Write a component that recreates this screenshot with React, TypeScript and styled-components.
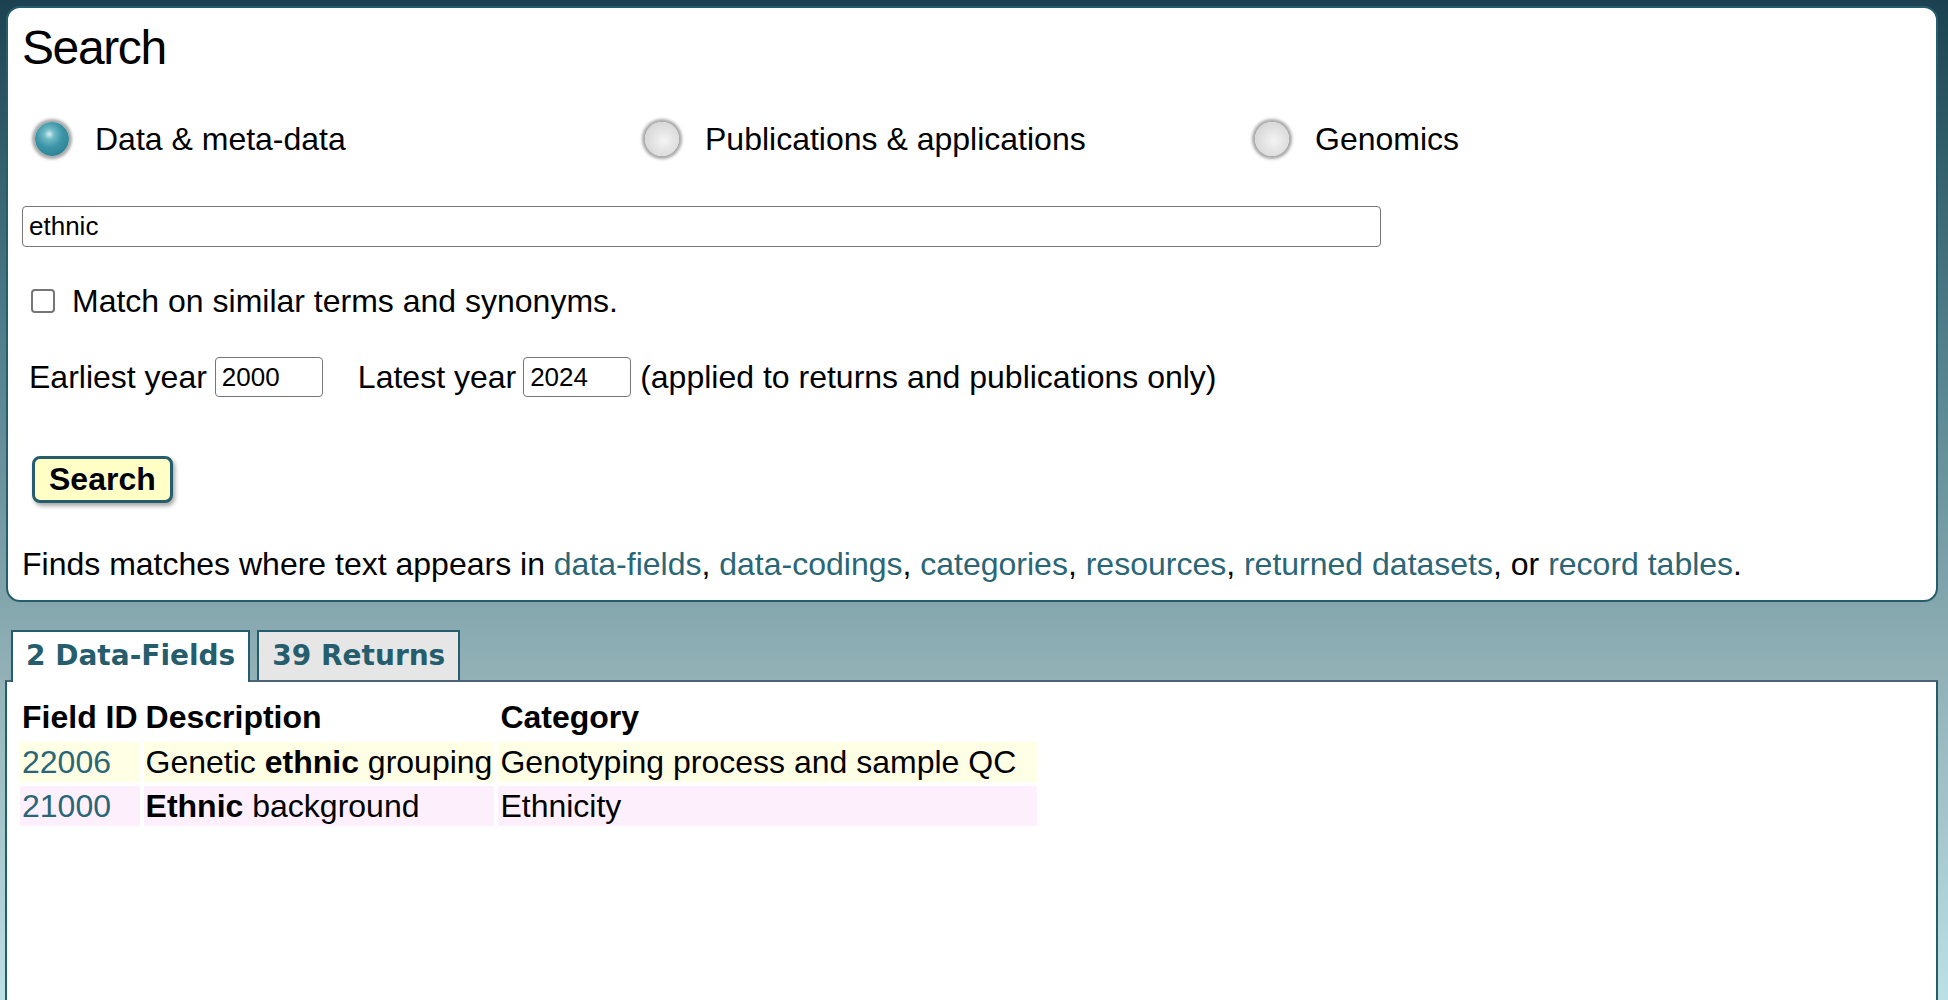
import React, { FC } from "react";
import styled, { createGlobalStyle } from "styled-components";

const teal = "#255d6c";
const linkColor = "#2a6676";

const GlobalStyle = createGlobalStyle`
  html, body {
    margin: 0;
    padding: 0;
  }
  body {
    font-family: "Liberation Sans", Arial, Helvetica, sans-serif;
    color: #000;
    min-height: 100vh;
    overflow: hidden;
    background: linear-gradient(
      to bottom,
      #1c4251 0%,
      #4f7d8a 30%,
      #8fafb5 60%,
      #c9eff1 100%
    );
  }
`;

const Page = styled.div`
  padding: 6px 10px 0 5px;
`;

const Panel = styled.div`
  margin-left: 1px;
  background: #fff;
  border: 2px solid ${teal};
  border-radius: 14px;
  padding: 12px 14px 16px 14px;
`;

const Heading = styled.h1`
  margin: 0;
  font-size: 48px;
  letter-spacing: -1.4px;
  font-weight: normal;
  line-height: 56px;
`;

const RadioRow = styled.div`
  margin-top: 38px;
  height: 50px;
  padding-left: 13px;
  display: grid;
  grid-template-columns: repeat(3, 610px);
  align-items: center;
`;

const RadioOption = styled.label`
  display: flex;
  align-items: center;
  gap: 26px;
  font-size: 32px;
`;

const RadioBall = styled.span<{ $checked?: boolean }>`
  width: 34px;
  height: 34px;
  border-radius: 50%;
  flex: none;
  background: ${(p) =>
    p.$checked
      ? "radial-gradient(circle at 42% 36%, #d8eef2 0%, #6fb9c6 18%, #3b95a6 45%, #2c8193 80%, #2a7687 100%)"
      : "radial-gradient(circle at 55% 55%, #f4f4f4 0%, #e2e2e2 45%, #cdcdcd 100%)"};
  box-shadow: 0 0 3px 3px rgba(110, 110, 110, 0.6);
`;

const TextInput = styled.input`
  display: block;
  margin-top: 42px;
  box-sizing: border-box;
  width: 1359px;
  height: 41px;
  border: 1.5px solid #767676;
  border-radius: 4px;
  padding: 0 6px;
  font-family: inherit;
  font-size: 26px;
  color: #000;
`;

const CheckRow = styled.label`
  margin-top: 34px;
  height: 40px;
  padding-left: 9px;
  display: flex;
  align-items: center;
  gap: 17px;
  font-size: 32px;
`;

const CheckBox = styled.input.attrs({ type: "checkbox" })`
  appearance: none;
  margin: 0;
  width: 24px;
  height: 24px;
  box-sizing: border-box;
  border: 2px solid #767676;
  border-radius: 4px;
  background: #fff;
`;

const YearRow = styled.div`
  margin-top: 35px;
  height: 42px;
  padding-left: 7px;
  display: flex;
  align-items: center;
  font-size: 32px;
  white-space: nowrap;
`;

const YearInput = styled.input<{ $before: number; $after: number }>`
  box-sizing: border-box;
  width: 108px;
  height: 40px;
  margin: 0 ${(p) => p.$after}px 0 ${(p) => p.$before}px;
  border: 1.5px solid #767676;
  border-radius: 4px;
  padding: 0 6px;
  font-family: inherit;
  font-size: 26px;
  color: #000;
`;

const ButtonRow = styled.div`
  margin-top: 58px;
  padding-left: 10px;
  display: flex;
`;

const SearchButton = styled.button`
  height: 47px;
  padding: 0 14px;
  background: #ffffc6;
  border: 3px solid ${teal};
  border-radius: 8px;
  box-shadow: 2px 3px 4px rgba(0, 0, 0, 0.35);
  font-family: inherit;
  font-weight: bold;
  font-size: 32px;
  color: #000;
  text-shadow: 0 0 2px #fff;
`;

const Info = styled.p`
  margin: 41px 0 0 0;
  line-height: 40px;
  font-size: 32px;
`;

const A = styled.a`
  color: ${linkColor};
  text-decoration: none;
  cursor: pointer;
`;

const Tabs = styled.div`
  margin-top: 28px;
  padding-left: 6px;
  display: flex;
  gap: 7px;
  align-items: flex-start;
`;

const Tab = styled.div<{ $active?: boolean }>`
  box-sizing: border-box;
  height: ${(p) => (p.$active ? 52 : 50)}px;
  margin-bottom: ${(p) => (p.$active ? -2 : 0)}px;
  position: relative;
  z-index: 1;
  padding: 0 13px;
  border: 2px solid ${teal};
  border-bottom: none;
  background: ${(p) => (p.$active ? "#fff" : "#e6e6e6")};
  font-family: "DejaVu Sans", Verdana, sans-serif;
  font-weight: bold;
  font-size: 28px;
  line-height: 48px;
  color: ${teal};
`;

const Content = styled.div`
  background: #fff;
  border: 2px solid ${teal};
  border-top-color: #4d6477;
  border-bottom: none;
  height: 400px;
  padding: 10px 9px;
`;

const Table = styled.table`
  border-collapse: separate;
  border-spacing: 4px 4px;
  font-size: 32px;
`;

const Th = styled.th`
  padding: 0 2px;
  height: 42px;
  text-align: left;
  white-space: nowrap;
  font-weight: bold;
  &:last-child {
    padding-right: 21px;
  }
`;

const Td = styled.td<{ $tone: string }>`
  padding: 0 2px;
  height: 40px;
  white-space: nowrap;
  background: ${(p) => p.$tone};
  &:last-child {
    padding-right: 21px;
  }
`;

interface Field {
  id: string;
  description: React.ReactNode;
  category: string;
}

const fields: Field[] = [
  {
    id: "22006",
    description: (
      <>
        Genetic <b>ethnic</b> grouping
      </>
    ),
    category: "Genotyping process and sample QC",
  },
  {
    id: "21000",
    description: (
      <>
        <b>Ethnic</b> background
      </>
    ),
    category: "Ethnicity",
  },
];

const tones = ["#ffffe6", "#fdf0fc"];

const App: FC = () => (
  <Page>
    <GlobalStyle />
    <Panel>
      <Heading>Search</Heading>
      <RadioRow>
        <RadioOption>
          <RadioBall $checked />
          Data &amp; meta-data
        </RadioOption>
        <RadioOption>
          <RadioBall />
          Publications &amp; applications
        </RadioOption>
        <RadioOption>
          <RadioBall />
          Genomics
        </RadioOption>
      </RadioRow>
      <TextInput defaultValue="ethnic" />
      <CheckRow>
        <CheckBox />
        Match on similar terms and synonyms.
      </CheckRow>
      <YearRow>
        Earliest year
        <YearInput defaultValue="2000" $before={8} $after={35} />
        Latest year
        <YearInput defaultValue="2024" $before={7} $after={9} />
        (applied to returns and publications only)
      </YearRow>
      <ButtonRow>
        <SearchButton>Search</SearchButton>
      </ButtonRow>
      <Info>
        Finds matches where text appears in <A>data-fields</A>,{" "}
        <A>data-codings</A>, <A>categories</A>, <A>resources</A>,{" "}
        <A>returned datasets</A>, or <A>record tables</A>.
      </Info>
    </Panel>
    <Tabs>
      <Tab $active>2 Data-Fields</Tab>
      <Tab>39 Returns</Tab>
    </Tabs>
    <Content>
      <Table>
        <thead>
          <tr>
            <Th>Field ID</Th>
            <Th>Description</Th>
            <Th>Category</Th>
          </tr>
        </thead>
        <tbody>
          {fields.map((f, i) => (
            <tr key={f.id}>
              <Td $tone={tones[i % 2]}>
                <A>{f.id}</A>
              </Td>
              <Td $tone={tones[i % 2]}>{f.description}</Td>
              <Td $tone={tones[i % 2]}>{f.category}</Td>
            </tr>
          ))}
        </tbody>
      </Table>
    </Content>
  </Page>
);

export default App;
